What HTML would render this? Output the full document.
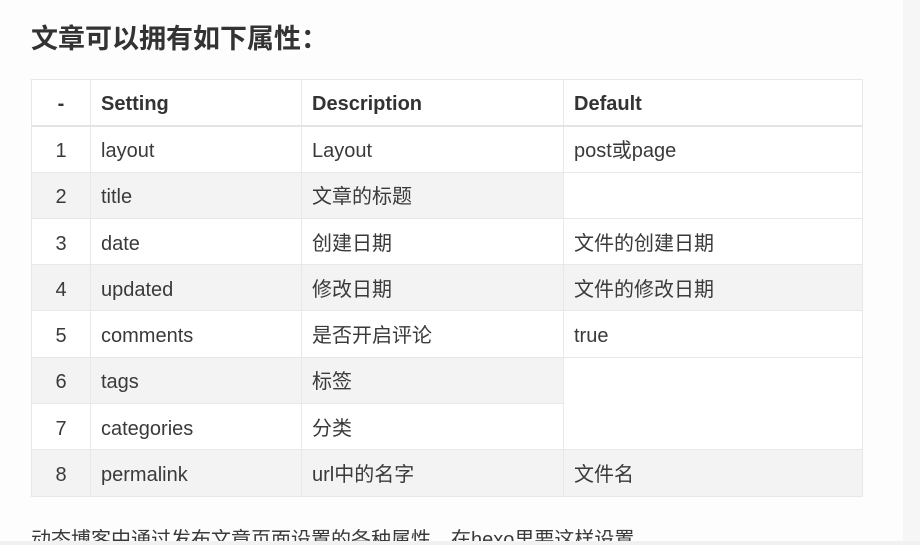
<!DOCTYPE html>
<html><head><meta charset="utf-8"><style>
html,body{margin:0;padding:0;width:920px;height:545px;overflow:hidden;background:#fdfdfd;}
body{font-family:"Liberation Sans","Noto Sans CJK SC",sans-serif;color:#333;position:relative;}
.strip{position:absolute;left:903px;top:0;width:17px;height:545px;background:#f6f6f6;}
h1{position:absolute;left:31px;top:17px;margin:0;font-size:27px;font-weight:bold;color:#333;line-height:44px;}
table{position:absolute;left:31px;top:79px;border-collapse:collapse;font-size:20px;background:#fff;color:#3a3a3a;}
td,th{border:1px solid #e8e8e8;height:46.3px;line-height:24px;padding:4px 0 0 10px;box-sizing:border-box;text-align:left;font-weight:normal;vertical-align:middle;}
th{font-weight:bold;border-bottom:2px solid #e4e4e4;color:#333;}
td:first-child,th:first-child{text-align:center;padding-left:0;}
tr.g td{background:#f3f3f3;}
td.w{background:#fff !important;}
p{position:absolute;left:31px;top:522px;margin:0;font-size:20px;line-height:36px;color:#3a3a3a;}
.bot{position:absolute;left:0;top:541px;width:920px;height:4px;background:#f1f1f1;}
</style></head><body>
<div class="strip"></div>
<h1>文章可以拥有如下属性：</h1>
<table>
<colgroup><col style="width:59px"><col style="width:211px"><col style="width:262px"><col style="width:299px"></colgroup>
<tr><th>-</th><th>Setting</th><th>Description</th><th>Default</th></tr>
<tr><td>1</td><td>layout</td><td>Layout</td><td>post或page</td></tr>
<tr class="g"><td>2</td><td>title</td><td>文章的标题</td><td class="w"></td></tr>
<tr><td>3</td><td>date</td><td>创建日期</td><td>文件的创建日期</td></tr>
<tr class="g"><td>4</td><td>updated</td><td>修改日期</td><td>文件的修改日期</td></tr>
<tr><td>5</td><td>comments</td><td>是否开启评论</td><td>true</td></tr>
<tr class="g"><td>6</td><td>tags</td><td>标签</td><td class="w" rowspan="2"></td></tr>
<tr><td>7</td><td>categories</td><td>分类</td></tr>
<tr class="g"><td>8</td><td>permalink</td><td>url中的名字</td><td>文件名</td></tr>
</table>
<p>动态博客中通过发布文章页面设置的各种属性，在hexo里要这样设置</p>
<div class="bot"></div>
</body></html>
